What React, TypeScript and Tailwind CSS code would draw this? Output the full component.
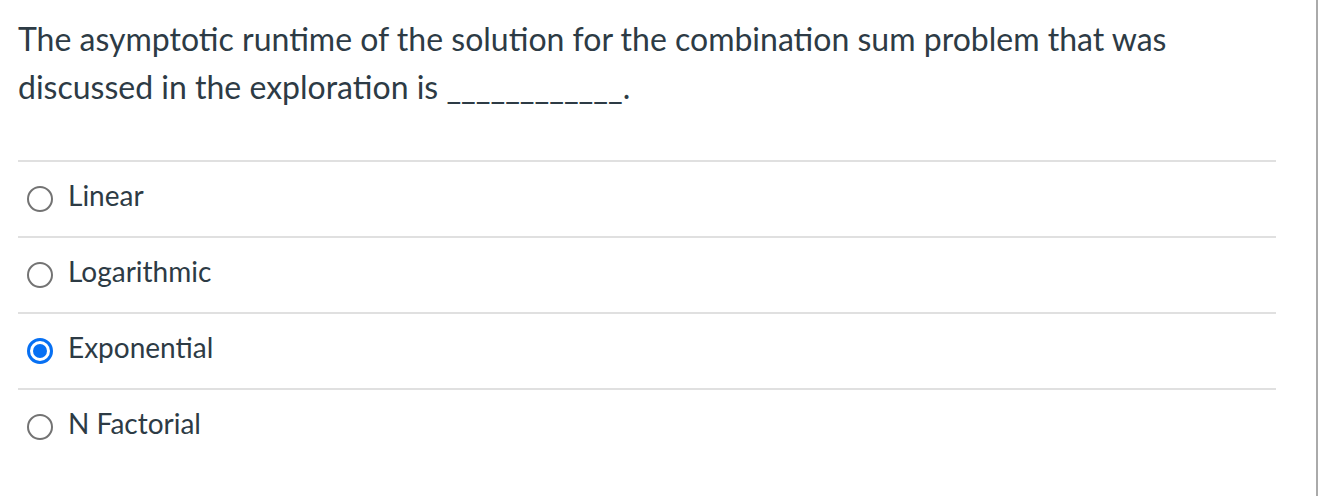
import React from "react";

const options = [
  { label: "Linear", selected: false },
  { label: "Logarithmic", selected: false },
  { label: "Exponential", selected: true },
  { label: "N Factorial", selected: false },
];

function Radio({ selected }: { selected: boolean }) {
  if (selected) {
    return (
      <span className="flex h-[26px] w-[26px] shrink-0 items-center justify-center rounded-full border-[3px] border-[#0770f3] bg-white">
        <span className="h-[14px] w-[14px] rounded-full bg-[#0770f3]" />
      </span>
    );
  }
  return (
    <span className="h-[26px] w-[26px] shrink-0 rounded-full border-2 border-[#737373] bg-white" />
  );
}

export default function App() {
  return (
    <div
      className="flex h-[496px] w-[1326px] bg-white text-[#2d3b45]"
      style={{ fontFamily: "Lato, 'Noto Sans', sans-serif" }}
    >
      <div className="w-[1316px] shrink-0">
        <div className="w-[1258px] pl-[18px] pt-[15px] box-content">
          <p className="text-[32px] leading-[48px]">
            The asymptotic runtime of the solution for the combination sum problem that was discussed in the exploration is ____________.
          </p>
          <div className="mt-[49px]">
            {options.map((o) => (
              <div key={o.label} className="flex h-[76px] items-center border-t-2 border-[#e0e0e0] pl-[9px]">
                <Radio selected={o.selected} />
                <span className="ml-[15px] -mt-[8px] text-[28px] leading-[36px]">{o.label}</span>
              </div>
            ))}
          </div>
        </div>
      </div>
      <div className="h-[496px] w-[2px] bg-[#aaaaaa]" />
    </div>
  );
}
